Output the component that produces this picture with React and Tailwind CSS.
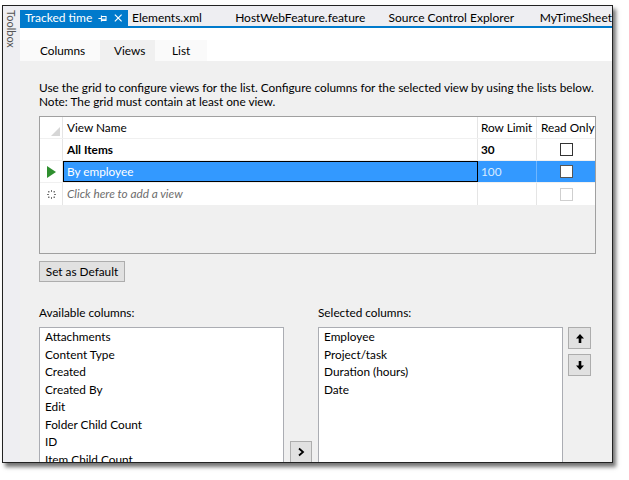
import React from 'react';

const font = { fontFamily: 'Lato, "Noto Sans", sans-serif' };

const available = [
  'Attachments',
  'Content Type',
  'Created',
  'Created By',
  'Edit',
  'Folder Child Count',
  'ID',
  'Item Child Count',
  'Modified',
];

const selected = ['Employee', 'Project/task', 'Duration (hours)', 'Date'];

function Checkbox({ disabled }) {
  return (
    <div
      className={
        disabled
          ? 'w-[13px] h-[13px] border border-[#cfcfcf] bg-white'
          : 'w-[13px] h-[13px] border border-[#333] bg-white'
      }
    />
  );
}

function PinIcon() {
  return (
    <svg width="11" height="9" viewBox="0 0 11 9" fill="none" stroke="white" strokeWidth="1.2">
      <path d="M0.5 4.5h3.5M4 1v7M4 2h5.5v5h-5.5M4 5.5h5.5" />
    </svg>
  );
}

function CloseIcon() {
  return (
    <svg width="10" height="10" viewBox="0 0 10 10" stroke="white" strokeWidth="1.4">
      <path d="M1 1l8 8M9 1l-8 8" />
    </svg>
  );
}

function NewRowIcon() {
  return (
    <svg width="9" height="9" viewBox="0 0 9 9" fill="#777">
      <rect x="4" y="0" width="1" height="2" />
      <rect x="4" y="7" width="1" height="2" />
      <rect x="0" y="4" width="2" height="1" />
      <rect x="7" y="4" width="2" height="1" />
      <rect x="1" y="1" width="1.5" height="1.5" />
      <rect x="6.5" y="1" width="1.5" height="1.5" />
      <rect x="1" y="6.5" width="1.5" height="1.5" />
      <rect x="6.5" y="6.5" width="1.5" height="1.5" />
    </svg>
  );
}

export default function App() {
  return (
    <div className="w-[629px] h-[480px] bg-white overflow-hidden text-[11.8px] text-black" style={font}>
      <div className="ml-[2px] mt-[5px] w-[611px] h-[458px] border border-[#222] shadow-[3px_4px_4px_rgba(0,0,0,0.55)] bg-white flex overflow-hidden">
        {/* Toolbox strip */}
        <div className="w-[17px] shrink-0 bg-[#eeeef2] flex justify-center pt-[4px]">
          <span className="[writing-mode:vertical-rl] text-[11px] text-[#555] leading-none">Toolbox</span>
        </div>

        <div className="flex-1 flex flex-col min-w-0">
          {/* Document tabs */}
          <div className="bg-[#eeeef2] pt-[4px]">
            <div className="flex h-[16px] items-center whitespace-nowrap text-[12px]">
              <div className="h-full bg-[#007acc] text-white flex items-center pl-[5px] pr-[6px] gap-[6px] w-[108px]">
                <span className="w-[68px]">Tracked time</span>
                <PinIcon />
                <CloseIcon />
              </div>
              <span className="ml-[4px] w-[109px]">Elements.xml</span>
              <span className="w-[162px]">HostWebFeature.feature</span>
              <span className="w-[160px]">Source Control Explorer</span>
              <span>MyTimeSheet</span>
            </div>
            <div className="h-[2px] bg-[#007acc]" />
          </div>

          {/* Sub tabs */}
          <div className="bg-white pt-[12px]">
            <div className="flex h-[21px] items-center">
              <div className="w-[80px] h-full bg-[#fafafa] flex items-center pl-[20px]">Columns</div>
              <div className="w-[55px] h-full bg-[#f0f0f0] flex items-center pl-[14px]">Views</div>
              <div className="w-[52px] h-full bg-[#fafafa] flex items-center pl-[17px]">List</div>
            </div>
          </div>

          {/* Content */}
          <div className="flex-1 bg-[#f0f0f0] pl-[19px] pr-[15px] pt-[20px] overflow-hidden">
            <p className="leading-[14px] whitespace-nowrap">
              Use the grid to configure views for the list. Configure columns for the selected view by using the lists below.
            </p>
            <p className="leading-[14px]">Note: The grid must contain at least one view.</p>

            {/* Grid */}
            <div className="mt-[7px] h-[138px] w-[557px] border border-[#a0a0a0] bg-[#f0f0f0] whitespace-nowrap">
              <div className="flex h-[22px] bg-white border-b border-[#f0f0f0]">
                <div className="w-[23px] border-r border-[#e5e5e5] relative">
                  <div className="absolute right-[2px] bottom-[2px] w-0 h-0 border-l-[9px] border-l-transparent border-b-[9px] border-b-[#d6d6d6]" />
                </div>
                <div className="w-[415px] border-r border-[#e5e5e5] flex items-center pl-[4px]">View Name</div>
                <div className="w-[59px] border-r border-[#e5e5e5] flex items-center pl-[3px]">Row Limit</div>
                <div className="flex-1 flex items-center pl-[4px]">Read Only</div>
              </div>
              <div className="flex h-[22px] bg-white border-b border-[#f0f0f0]">
                <div className="w-[23px] border-r border-[#e5e5e5]" />
                <div className="w-[415px] border-r border-[#e5e5e5] flex items-center pl-[4px] font-bold">All Items</div>
                <div className="w-[59px] border-r border-[#e5e5e5] flex items-center pl-[3px] font-bold">30</div>
                <div className="flex-1 flex items-center justify-center">
                  <Checkbox />
                </div>
              </div>
              <div className="flex h-[22px] border-b border-[#f0f0f0]">
                <div className="w-[23px] bg-white border-r border-[#e5e5e5] flex items-center justify-center">
                  <div className="w-0 h-0 border-t-[6px] border-t-transparent border-b-[6px] border-b-transparent border-l-[9px] border-l-[#2f8f2f]" />
                </div>
                <div className="w-[415px] bg-[#3399ff] border border-dotted border-black outline outline-1 outline-black -outline-offset-1 flex items-center pl-[3px] text-white">
                  By employee
                </div>
                <div className="w-[59px] bg-[#3399ff] border-r border-[#6fb6ff] flex items-center pl-[3px] text-[#d8ebff]">100</div>
                <div className="flex-1 bg-[#3399ff] flex items-center justify-center">
                  <div className="w-[13px] h-[13px] border border-[#555] bg-white" />
                </div>
              </div>
              <div className="flex h-[22px] bg-white">
                <div className="w-[23px] border-r border-[#e5e5e5] flex items-center justify-center">
                  <NewRowIcon />
                </div>
                <div className="w-[415px] border-r border-[#e5e5e5] flex items-center pl-[4px] italic text-[#6d6d6d]">
                  Click here to add a view
                </div>
                <div className="w-[59px] border-r border-[#e5e5e5]" />
                <div className="flex-1 flex items-center justify-center">
                  <Checkbox disabled />
                </div>
              </div>
            </div>

            <button className="mt-[7px] h-[21px] w-[86px] bg-[#e1e1e1] border border-[#adadad] flex items-center justify-center">
              Set as Default
            </button>

            {/* Column pickers */}
            <div className="mt-[24px] flex">
              <div className="w-[245px] flex flex-col">
                <div className="h-[14px] leading-[14px]">Available columns:</div>
                <div className="mt-[7px] h-[170px] bg-white border border-[#abadb3] pl-[5px]">
                  {available.map((c) => (
                    <div key={c} className="h-[17.5px] leading-[17.5px] whitespace-nowrap">{c}</div>
                  ))}
                </div>
              </div>

              <div className="ml-[6px] w-[22px] flex flex-col pt-[135px]">
                <button className="w-[22px] h-[22px] bg-[#e1e1e1] border border-[#adadad] flex items-center justify-center">
                  <svg width="8" height="10" viewBox="0 0 8 10" fill="none" stroke="black" strokeWidth="1.8">
                    <path d="M2 1.5l4 3.5-4 3.5" />
                  </svg>
                </button>
              </div>

              <div className="ml-[6px] w-[245px] flex flex-col">
                <div className="h-[14px] leading-[14px]">Selected columns:</div>
                <div className="mt-[7px] h-[170px] bg-white border border-[#abadb3] pl-[5px]">
                  {selected.map((c) => (
                    <div key={c} className="h-[17.5px] leading-[17.5px] whitespace-nowrap">{c}</div>
                  ))}
                </div>
              </div>

              <div className="ml-[5px] pt-[21px] flex flex-col gap-[5px]">
                <button className="w-[23px] h-[22px] bg-[#e1e1e1] border border-[#adadad] flex items-center justify-center">
                  <svg width="8" height="9" viewBox="0 0 8 9" fill="black">
                    <path d="M4 0L8 4.5H5.3V9H2.7V4.5H0Z" />
                  </svg>
                </button>
                <button className="w-[23px] h-[22px] bg-[#e1e1e1] border border-[#adadad] flex items-center justify-center">
                  <svg width="8" height="9" viewBox="0 0 8 9" fill="black">
                    <path d="M4 9L8 4.5H5.3V0H2.7V4.5H0Z" />
                  </svg>
                </button>
              </div>
            </div>
          </div>
        </div>
      </div>
    </div>
  );
}
